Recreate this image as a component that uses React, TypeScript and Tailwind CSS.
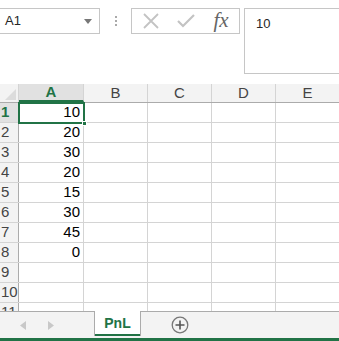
import React from "react";

const cols = ["A", "B", "C", "D", "E"];
const colWidths = [65, 64, 64, 64, 64];
const values: Record<number, string> = { 1: "10", 2: "20", 3: "30", 4: "20", 5: "15", 6: "30", 7: "45", 8: "0" };

export default function App() {
  const rows = Array.from({ length: 11 }, (_, i) => i + 1);

  return (
    <div className="w-[339px] h-[341px] overflow-hidden bg-white flex flex-col text-[#262626]" style={{ fontFamily: '"Liberation Sans", Arial, sans-serif' }}>
      {/* formula bar */}
      <div className="h-[84px] shrink-0 flex items-start pt-[8px]">
        <div className="w-[100px] h-[26px] border border-[#c6c6c6] border-l-0 flex items-center justify-between pl-[5px] pr-[7px]">
          <span className="text-[13px]">A1</span>
          <svg width="8" height="5" viewBox="0 0 8 5"><path d="M0 0h8L4 5z" fill="#777" /></svg>
        </div>
        <div className="w-[31px] h-[26px] flex flex-col items-center justify-center gap-[2px]">
          <span className="w-[2px] h-[2px] bg-[#aaa]" />
          <span className="w-[2px] h-[2px] bg-[#aaa]" />
          <span className="w-[2px] h-[2px] bg-[#aaa]" />
        </div>
        <div className="w-[109px] h-[26px] border border-[#c6c6c6] flex items-center">
          <div className="w-[37px] flex justify-center">
            <svg width="16" height="16" viewBox="0 0 16 16"><path d="M1 1l14 14M15 1L1 15" stroke="#c3c3c3" strokeWidth="1.8" /></svg>
          </div>
          <div className="w-[34px] flex justify-center">
            <svg width="18" height="14" viewBox="0 0 18 14"><path d="M1 7l5 5L17 1" stroke="#c3c3c3" strokeWidth="2.2" fill="none" /></svg>
          </div>
          <div className="flex-1 flex justify-center">
            <span className="text-[21px] italic text-[#666] leading-none -mt-[2px]" style={{ fontFamily: '"Liberation Serif", serif' }}>fx</span>
          </div>
        </div>
        <div className="ml-[4px] flex-1 h-[66px] border border-[#c6c6c6] border-r-0 pl-[11px] pt-[2px]">
          <span className="text-[13px]">10</span>
        </div>
      </div>

      {/* grid */}
      <div className="flex-1 relative overflow-hidden">
        <div className="flex h-[19px] bg-[#f3f3f3] border-b border-[#ababab]">
          <div className="w-[19px] shrink-0 border-r border-[#d4d4d4] relative">
            <svg className="absolute right-[2px] bottom-[2px]" width="11" height="11" viewBox="0 0 11 11"><path d="M11 0v11H0z" fill="#dcdcdc" /></svg>
          </div>
          {cols.map((c, i) => (
            <div
              key={c}
              className={`shrink-0 flex items-center justify-center text-[15px] border-r border-[#d4d4d4] ${i === 0 ? "bg-[#e1e1e1] text-[#217346] font-bold border-b-2 border-b-[#217346]" : "text-[#444]"}`}
              style={{ width: colWidths[i] }}
            >
              {c}
            </div>
          ))}
        </div>
        {rows.map((r) => (
          <div key={r} className="flex h-[20px] border-b border-[#d4d4d4]">
            <div className={`w-[19px] shrink-0 flex items-center text-[15px] pl-[1px] border-r border-[#ababab] ${r === 1 ? "bg-[#e1e1e1] text-[#217346] font-bold" : "bg-[#f3f3f3] text-[#444]"}`}>
              {r}
            </div>
            {cols.map((c, i) => (
              <div
                key={c}
                className="shrink-0 flex items-center justify-end pr-[3px] text-[15px] text-black border-r border-[#d4d4d4]"
                style={{ width: colWidths[i] }}
              >
                {i === 0 ? values[r] ?? "" : ""}
              </div>
            ))}
          </div>
        ))}
        {/* selection */}
        <div className="absolute left-[18px] top-[18px] w-[67px] h-[22px] border-2 border-[#217346]" />
        <div className="absolute left-[82px] top-[37px] w-[5px] h-[5px] bg-[#217346] border border-white" />
      </div>

      {/* sheet tabs */}
      <div className="h-[27px] shrink-0 bg-[#f3f3f3] border-t border-[#ababab] flex items-start relative">
        <div className="w-[94px] h-full flex items-center pl-[20px] gap-[22px]">
          <svg width="6" height="9" viewBox="0 0 6 9"><path d="M6 0v9L0 4.5z" fill="#c8c8c8" /></svg>
          <svg width="6" height="9" viewBox="0 0 6 9"><path d="M0 0v9l6-4.5z" fill="#c8c8c8" /></svg>
        </div>
        <div className="-mt-px w-[47px] h-[25px] bg-white border-x border-[#ababab] flex flex-col items-center justify-end">
          <span className="text-[14px] font-bold text-[#217346] leading-none mb-[4px]">PnL</span>
          <div className="w-[45px] h-[2px] bg-[#217346]" />
        </div>
        <div className="ml-[30px] h-full flex items-center">
          <svg width="18" height="18" viewBox="0 0 18 18">
            <circle cx="9" cy="9" r="7.8" fill="none" stroke="#777" strokeWidth="1.3" />
            <path d="M9 4.5v9M4.5 9h9" stroke="#555" strokeWidth="1.6" />
          </svg>
        </div>
      </div>
      <div className="h-[3px] shrink-0 bg-[#217346]" />
    </div>
  );
}
